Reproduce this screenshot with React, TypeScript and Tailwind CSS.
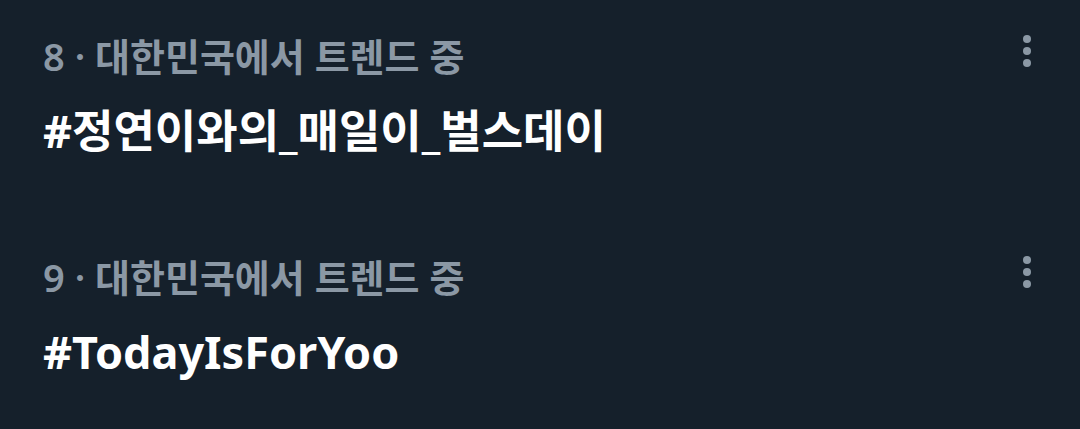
import { useState } from 'react';

interface Trend {
  rank: number;
  place: string;
  name: string;
}

const trends: Trend[] = [
  { rank: 8, place: '대한민국에서 트렌드 중', name: '#정연이와의_매일이_벌스데이' },
  { rank: 9, place: '대한민국에서 트렌드 중', name: '#TodayIsForYoo' },
];

function MoreIcon() {
  return (
    <svg width="10" height="34" viewBox="0 0 10 34" className="text-[#8b98a5]" fill="currentColor">
      <circle cx="5" cy="5" r="4" />
      <circle cx="5" cy="17" r="4" />
      <circle cx="5" cy="29" r="4" />
    </svg>
  );
}

function TrendItem({ trend }: { trend: Trend }) {
  return (
    <div className="flex justify-between pl-[43px] pr-[48px] h-[221px]">
      <div>
        <div className="pt-[30px] text-[38px] leading-[52px] font-semibold text-[#8b98a5]">
          {trend.rank} · {trend.place}
        </div>
        <div className="mt-[23px] text-[45px] leading-[52px] font-bold text-white">
          {trend.name}
        </div>
      </div>
      <div className="pt-[34px]">
        <MoreIcon />
      </div>
    </div>
  );
}

export default function App() {
  const [items] = useState(trends);

  return (
    <div
      className="w-[1080px] h-[429px] bg-[#15202b] overflow-hidden"
      style={{ fontFamily: '"Noto Sans", "Noto Sans CJK KR", sans-serif' }}
    >
      {items.map((t) => (
        <TrendItem key={t.rank} trend={t} />
      ))}
    </div>
  );
}
